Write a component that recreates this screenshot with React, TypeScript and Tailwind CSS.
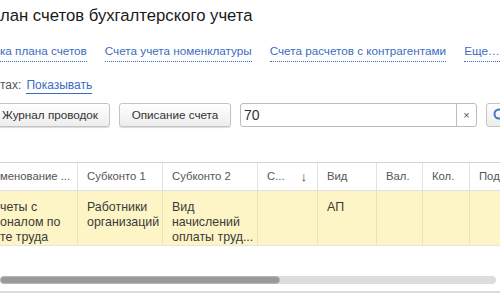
import React from "react";

const link = "text-[#3a6cc2] border-b border-dotted border-[#3a6cc2] leading-[14px] whitespace-nowrap";

function Btn({ children, className = "" }: { children: React.ReactNode; className?: string }) {
  return (
    <div
      className={
        "shrink-0 h-[24px] flex items-center rounded-[3px] border border-[#c4c4c4] bg-gradient-to-b from-white to-[#ededed] shadow-[0_1px_1px_rgba(0,0,0,0.15)] text-[11.7px] text-[#333] whitespace-nowrap " +
        className
      }
    >
      {children}
    </div>
  );
}

const cols = [78, 85, 95, 60, 59, 46, 47, 60];

export default function App() {
  return (
    <div className="w-[500px] h-[300px] overflow-hidden bg-white font-['Liberation_Sans',Arial,sans-serif] relative">
      {/* Title */}
      <div className="h-[32px] pt-[6px] text-[16.7px] leading-[20px] text-[#1a1a1a] whitespace-nowrap">
        лан счетов бухгалтерского учета
      </div>
      {/* Links */}
      <div className="h-[30px] pt-[12px] flex gap-[18px] text-[11.7px] whitespace-nowrap">
        <span className={link}>ка плана счетов</span>
        <span className={link}>Счета учета номенклатуры</span>
        <span className={link}>Счета расчетов с контрагентами</span>
        <span className={link}>Еще…</span>
      </div>
      {/* subaccounts */}
      <div className="h-[32px] pt-[17px] flex text-[12px] leading-[13px] whitespace-nowrap">
        <span className="text-[#555]">тах:</span>
        <span className="ml-[5px] text-[#3a6cc2] border-b border-[#3a6cc2]">Показывать</span>
      </div>
      {/* toolbar */}
      <div className="flex items-center h-[24px] mt-[9px]">
        <Btn className="w-[122px] -ml-[12px] pl-[13px]">Журнал проводок</Btn>
        <Btn className="w-[112px] ml-[9px] justify-center">Описание счета</Btn>
        <div className="shrink-0 ml-[9px] w-[237px] h-[24px] flex rounded-[3px] border border-[#bdbdbd] bg-white">
          <div className="flex-1 pl-[3px] text-[14px] leading-[22px] text-[#333]">70</div>
          <div className="w-[20px] border-l border-[#bdbdbd] flex items-center justify-center text-[11px] text-[#555]">×</div>
        </div>
        <div className="shrink-0 ml-[9px] w-[40px] h-[24px] rounded-[3px] border border-[#c4c4c4] bg-gradient-to-b from-white to-[#ededed] flex items-center pl-[6px]">
          <svg width="14" height="14" viewBox="0 0 14 14">
            <circle cx="6" cy="6" r="4.5" fill="none" stroke="#3a78c4" strokeWidth="2" />
            <line x1="9.5" y1="9.5" x2="13" y2="13" stroke="#3a78c4" strokeWidth="2.2" />
          </svg>
        </div>
      </div>
      {/* table */}
      <div className="mt-[35px] border-t border-[#d4d4d4]">
        <div className="flex h-[28px] text-[11.3px] text-[#555] border-b border-[#e2e2e2]">
          {[
            "менование ...",
            "Субконто 1",
            "Субконто 2",
            "С...",
            "Вид",
            "Вал.",
            "Кол.",
            "Под",
          ].map((t, i) => (
            <div
              key={i}
              style={{ width: cols[i] }}
              className={
                "shrink-0 flex items-center whitespace-nowrap overflow-hidden border-r border-[#e2e2e2] " +
                (i === 0 ? "pl-0" : "pl-[9px]")
              }
            >
              {t}
              {i === 3 && <span className="ml-[16px] text-[13px] text-[#444]">↓</span>}
            </div>
          ))}
        </div>
        <div className="flex h-[55px] bg-[#fdf5c6] text-[12.4px] leading-[15px] text-[#3a3a3a] border-b border-[#e5e5e5]">
          {[
            ["четы с", "оналом по", "те труда"],
            ["Работники", "организаций"],
            ["Вид", "начислений", "оплаты труд..."],
            [],
            ["АП"],
            [],
            [],
            [],
          ].map((lines, i) => (
            <div
              key={i}
              style={{ width: cols[i] }}
              className={
                "shrink-0 pt-[9px] whitespace-nowrap overflow-hidden border-r border-[#ece3b4] " +
                (i === 0 ? "pl-0" : "pl-[9px]")
              }
            >
              {lines.map((l, j) => (
                <div key={j}>{l}</div>
              ))}
            </div>
          ))}
        </div>
      </div>
      {/* scrollbar */}
      <div className="mt-[30px] w-[496px] h-[8px] rounded-full bg-[#dcdcdc] flex">
        <div className="w-[280px] h-[8px] rounded-full bg-[#9a9a9a] border border-[#b5b5b5]" />
      </div>
      <div className="mt-[7px] h-[2px] bg-[#dcdcdc]" />
    </div>
  );
}
